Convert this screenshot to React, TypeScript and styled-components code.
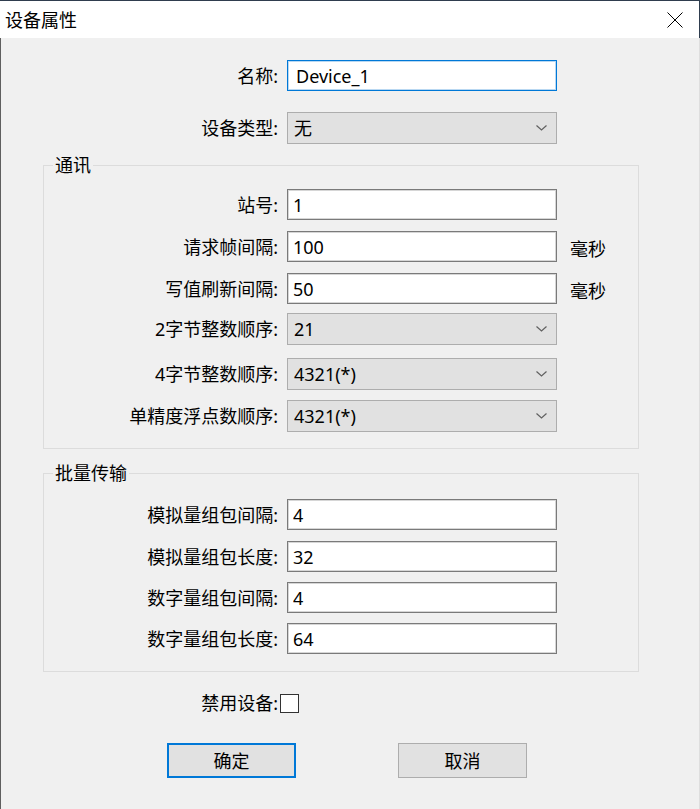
import React from 'react';
import styled, { createGlobalStyle } from 'styled-components';

const GlobalStyle = createGlobalStyle`
  html, body { margin: 0; padding: 0; background: #f0f0f0; }
  body { font-family: "Noto Sans", "Noto Sans CJK SC", sans-serif; }
  * { box-sizing: border-box; }
`;

const Window = styled.div`
  width: 700px;
  height: 809px;
  background: #f0f0f0;
  display: flex;
  flex-direction: column;
  overflow: hidden;
  font-family: "Noto Sans", "Noto Sans CJK SC", sans-serif;
  font-size: 18px;
  color: #000;
`;

const TitleBar = styled.div`
  height: 38px;
  flex: none;
  border-top: 1px solid #2f3d4e;
  border-right: 1px solid #2f3d4e;
  background: #fff;
  display: flex;
  align-items: center;
  justify-content: space-between;
  padding-left: 5px;
`;

const Title = styled.span`
  font-size: 18px;
  line-height: 20px;
`;

const CloseButton = styled.div`
  width: 46px;
  height: 100%;
  display: flex;
  align-items: center;
  justify-content: center;
  margin-right: 1px;
`;

const Body = styled.div`
  flex: 1;
  border-left: 1px solid #5f5f5f;
  border-right: 1px solid #dedede;
  padding: 22px 60px 0 42px;
`;

const TopForm = styled.div`
  padding-left: 1px;
`;

const Row = styled.div<{ $mt?: number }>`
  display: grid;
  grid-template-columns: 234px 270px auto;
  column-gap: 9px;
  align-items: center;
  margin-top: ${(p) => p.$mt ?? 0}px;
`;

const Label = styled.label`
  text-align: right;
  white-space: nowrap;
  line-height: 20px;
`;

const TextInput = styled.input<{ $focused?: boolean }>`
  width: 270px;
  height: 31px;
  border: 1px solid ${(p) => (p.$focused ? '#0078d7' : '#7a7a7a')};
  box-shadow: inset 0 0 0 1px ${(p) => (p.$focused ? '#b9d8f2' : '#d6d6d6')};
  padding: 0 ${(p) => (p.$focused ? 8 : 5)}px;
  font-family: inherit;
  font-size: 18px;
  color: #000;
  background: #fff;
  outline: none;
  margin: 0;
`;

const SelectBox = styled.div`
  width: 270px;
  height: 32px;
  border: 1px solid #adadad;
  background: #e1e1e1;
  display: flex;
  align-items: center;
  justify-content: space-between;
  padding: 0 9px 0 6px;
  line-height: 20px;
`;

const Unit = styled.span`
  margin-left: 4px;
  padding-top: 3px;
  white-space: nowrap;
`;

const Group = styled.fieldset<{ $mt: number; $pt: number; $pb: number }>`
  margin: ${(p) => p.$mt}px 0 0 0;
  padding: ${(p) => p.$pt}px 0 ${(p) => p.$pb}px 0;
  border: 1px solid #dcdcdc;
  min-width: 0;
`;

const Legend = styled.legend`
  margin-left: 9px;
  padding: 0 2px;
  line-height: 20px;
  font-size: 18px;
`;

const CheckRow = styled.div`
  display: grid;
  grid-template-columns: 234px auto;
  column-gap: 2px;
  align-items: center;
  margin-top: 21px;
  padding-left: 1px;
`;

const CheckBox = styled.span`
  display: block;
  width: 19px;
  height: 19px;
  border: 1px solid #333;
  background: #fff;
`;

const ButtonRow = styled.div`
  display: flex;
  gap: 102px;
  margin-top: 30px;
  padding-left: 124px;
`;

const Button = styled.button<{ $primary?: boolean }>`
  width: 129px;
  height: 35px;
  margin: 0;
  padding: 0;
  background: #e1e1e1;
  border: ${(p) => (p.$primary ? '2px solid #0078d7' : '1px solid #adadad')};
  font-family: inherit;
  font-size: 18px;
  color: #000;
  line-height: 20px;
`;

const Chevron = () => (
  <svg width="11" height="6" viewBox="0 0 11 6">
    <polyline points="0.5,0.5 5.5,5 10.5,0.5" fill="none" stroke="#606060" strokeWidth="1.2" />
  </svg>
);

const CloseIcon = () => (
  <svg width="16" height="16" viewBox="0 0 16 16">
    <line x1="0.5" y1="0.5" x2="15.5" y2="15.5" stroke="#000" strokeWidth="1" />
    <line x1="15.5" y1="0.5" x2="0.5" y2="15.5" stroke="#000" strokeWidth="1" />
  </svg>
);

const Select: React.FC<{ value: string }> = ({ value }) => (
  <SelectBox>
    <span>{value}</span>
    <Chevron />
  </SelectBox>
);

type Field = {
  label: string;
  value: string;
  kind: 'input' | 'select';
  mt: number;
  unit?: string;
};

const commFields: Field[] = [
  { label: '站号:', value: '1', kind: 'input', mt: 0 },
  { label: '请求帧间隔:', value: '100', kind: 'input', mt: 11, unit: '毫秒' },
  { label: '写值刷新间隔:', value: '50', kind: 'input', mt: 11, unit: '毫秒' },
  { label: '2字节整数顺序:', value: '21', kind: 'select', mt: 9 },
  { label: '4字节整数顺序:', value: '4321(*)', kind: 'select', mt: 13 },
  { label: '单精度浮点数顺序:', value: '4321(*)', kind: 'select', mt: 10 },
];

const batchFields: Field[] = [
  { label: '模拟量组包间隔:', value: '4', kind: 'input', mt: 0 },
  { label: '模拟量组包长度:', value: '32', kind: 'input', mt: 11 },
  { label: '数字量组包间隔:', value: '4', kind: 'input', mt: 10 },
  { label: '数字量组包长度:', value: '64', kind: 'input', mt: 10 },
];

const FieldRow: React.FC<{ f: Field }> = ({ f }) => (
  <Row $mt={f.mt}>
    <Label>{f.label}</Label>
    {f.kind === 'input' ? <TextInput defaultValue={f.value} /> : <Select value={f.value} />}
    {f.unit ? <Unit>{f.unit}</Unit> : <span />}
  </Row>
);

export default function App() {
  return (
    <>
      <GlobalStyle />
      <Window>
        <TitleBar>
          <Title>设备属性</Title>
          <CloseButton>
            <CloseIcon />
          </CloseButton>
        </TitleBar>
        <Body>
          <TopForm>
            <Row>
              <Label>名称:</Label>
              <TextInput $focused defaultValue="Device_1" />
              <span />
            </Row>
            <Row $mt={21}>
              <Label>设备类型:</Label>
              <Select value="无" />
              <span />
            </Row>
          </TopForm>

          <Group $mt={11} $pt={14} $pb={16}>
            <Legend>通讯</Legend>
            {commFields.map((f) => (
              <FieldRow key={f.label} f={f} />
            ))}
          </Group>

          <Group $mt={14} $pt={16} $pb={17}>
            <Legend>批量传输</Legend>
            {batchFields.map((f) => (
              <FieldRow key={f.label} f={f} />
            ))}
          </Group>

          <CheckRow>
            <Label>禁用设备:</Label>
            <CheckBox />
          </CheckRow>

          <ButtonRow>
            <Button $primary>确定</Button>
            <Button>取消</Button>
          </ButtonRow>
        </Body>
      </Window>
    </>
  );
}
